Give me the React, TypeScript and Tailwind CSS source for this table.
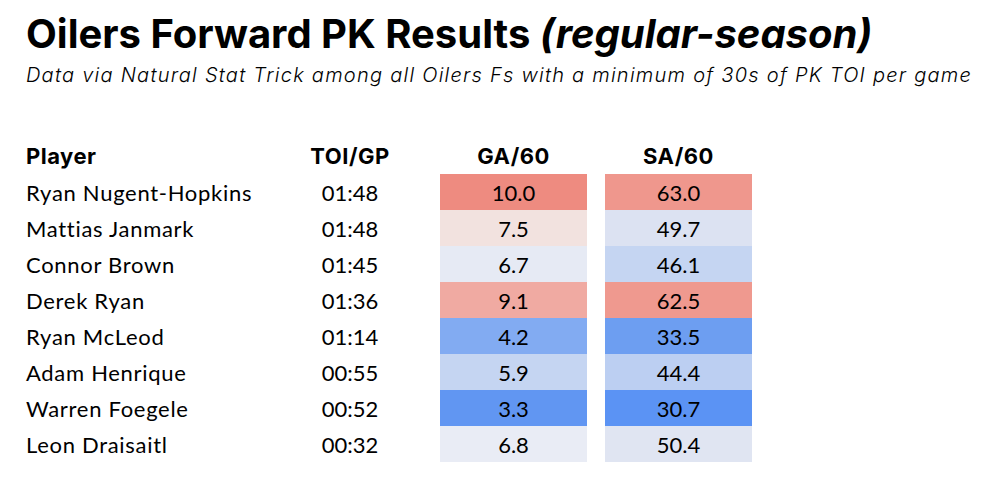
const rows = [
  { name: "Ryan Nugent-Hopkins", toi: "01:48", ga: "10.0", gaBg: "bg-[#ee8b80]", sa: "63.0", saBg: "bg-[#ef978d]" },
  { name: "Mattias Janmark", toi: "01:48", ga: "7.5", gaBg: "bg-[#f2e2df]", sa: "49.7", saBg: "bg-[#dce2f2]" },
  { name: "Connor Brown", toi: "01:45", ga: "6.7", gaBg: "bg-[#e6eaf4]", sa: "46.1", saBg: "bg-[#c5d5f2]" },
  { name: "Derek Ryan", toi: "01:36", ga: "9.1", gaBg: "bg-[#f0aaa2]", sa: "62.5", saBg: "bg-[#ef998f]" },
  { name: "Ryan McLeod", toi: "01:14", ga: "4.2", gaBg: "bg-[#82abf2]", sa: "33.5", saBg: "bg-[#6d9ef1]" },
  { name: "Adam Henrique", toi: "00:55", ga: "5.9", gaBg: "bg-[#c5d5f2]", sa: "44.4", saBg: "bg-[#bccff2]" },
  { name: "Warren Foegele", toi: "00:52", ga: "3.3", gaBg: "bg-[#6196f2]", sa: "30.7", saBg: "bg-[#5b93f4]" },
  { name: "Leon Draisaitl", toi: "00:32", ga: "6.8", gaBg: "bg-[#e9ecf5]", sa: "50.4", saBg: "bg-[#e0e5f2]" },
];

export default function App() {
  return (
    <div className="w-[990px] h-[481px] bg-white text-black pl-[26px] pt-[12px]">
      <h1 className="font-['Inter',sans-serif] font-bold text-[40px] leading-[44px] whitespace-nowrap">
        Oilers Forward PK Results <span className="italic">(regular-season)</span>
      </h1>
      <p className="font-['Inter',sans-serif] italic font-light text-[20px] leading-[28px] mt-[5px] tracking-[1.25px] whitespace-nowrap">
        Data via Natural Stat Trick among all Oilers Fs with a minimum of 30s of PK TOI per game
      </p>

      <div className="mt-[45px] font-['Lato',sans-serif] text-[22px]">
        <div className="flex h-[40px] items-end pb-[1px] font-['Inter',sans-serif] font-bold text-[22px] tracking-[0.5px]">
          <div className="w-[264px]">Player</div>
          <div className="w-[120px] text-center">TOI/GP</div>
          <div className="w-[147px] ml-[30px] text-center">GA/60</div>
          <div className="w-[147px] ml-[18px] text-center">SA/60</div>
        </div>
        {rows.map((r) => (
          <div key={r.name} className="flex h-[36px] items-center">
            <div className="w-[264px] tracking-[0.7px]">{r.name}</div>
            <div className="w-[120px] text-center">{r.toi}</div>
            <div className={`w-[147px] ml-[30px] h-full flex items-center justify-center ${r.gaBg}`}>{r.ga}</div>
            <div className={`w-[147px] ml-[18px] h-full flex items-center justify-center ${r.saBg}`}>{r.sa}</div>
          </div>
        ))}
      </div>
    </div>
  );
}
